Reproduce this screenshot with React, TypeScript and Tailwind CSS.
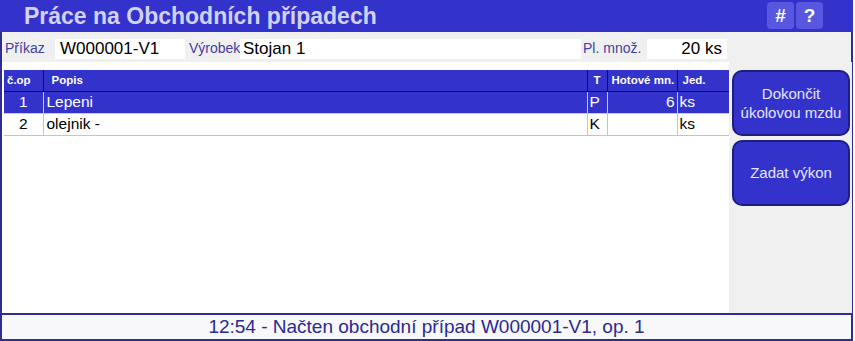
import React from "react";

type Row = {
  op: string;
  popis: string;
  t: string;
  hotove: string;
  jed: string;
};

const rows: Row[] = [
  { op: "1", popis: "Lepeni", t: "P", hotove: "6", jed: "ks" },
  { op: "2", popis: "olejnik -", t: "K", hotove: "", jed: "ks" },
];

const App: React.FC = () => {
  return (
    <div className="w-[855px] h-[341px] bg-white font-['Liberation_Sans',Arial,sans-serif]">
      <div className="w-[853px] h-[341px] flex flex-col border-x-2 border-b-2 border-[#2e2e8e]">
        {/* Title bar */}
        <div className="h-[32px] -mx-[2px] flex items-center bg-[#3333cc] pl-[24px] pr-[30px]">
          <h1 className="flex-1 text-[23px] font-bold text-[#d2d2f6] leading-none pt-[1px]">
            Práce na Obchodních případech
          </h1>
          <div className="flex gap-[2px] -mt-[1px]">
            <button className="w-[27px] h-[27px] rounded-[4px] bg-[#5757e0] text-white font-bold text-[19px] leading-none">
              #
            </button>
            <button className="w-[27px] h-[27px] rounded-[4px] bg-[#5757e0] text-white font-bold text-[19px] leading-none">
              ?
            </button>
          </div>
        </div>

        {/* Header info */}
        <div className="h-[30px] flex items-center bg-[#f0f0f0] pt-[3px] text-[14px]">
          <span className="w-[53px] pl-[3px] text-[#4040a4]">Příkaz</span>
          <div className="w-[130px] h-[20px] bg-white pl-[5px] text-[17px] leading-[20px] text-black">
            W000001-V1
          </div>
          <span className="w-[55px] pl-[4px] text-[#4040a4]">Výrobek</span>
          <div className="w-[341px] h-[20px] bg-white pl-[3px] text-[17px] leading-[20px] text-black">
            Stojan 1
          </div>
          <span className="w-[66px] pl-[2px] text-[#4040a4]">Pl. množ.</span>
          <div className="w-[80px] h-[20px] bg-white pr-[5px] text-right text-[17px] leading-[20px] text-black">
            20 ks
          </div>
        </div>

        {/* Content */}
        <div className="flex-1 flex min-h-0">
          <div className="w-[728px] bg-white pt-[8px] pl-[2px]">
            <table className="w-[725px] table-fixed border-collapse">
              <colgroup>
                <col className="w-[39px]" />
                <col className="w-[544px]" />
                <col className="w-[20px]" />
                <col className="w-[70px]" />
                <col className="w-[52px]" />
              </colgroup>
              <thead>
                <tr className="h-[21px] bg-[#3333cc] text-white text-[11.5px] font-bold">
                  <th className="text-left pl-[3px] border-r border-b border-[#10104a]">č.op</th>
                  <th className="text-left pl-[8px] border-r border-b border-[#10104a]">Popis</th>
                  <th className="text-center border-r border-b border-[#10104a]">T</th>
                  <th className="text-left pl-[4px] border-r border-b border-[#10104a]">Hotové mn.</th>
                  <th className="text-left pl-[5px] border-b border-[#10104a]">Jed.</th>
                </tr>
              </thead>
              <tbody className="text-[15.5px]">
                {rows.map((r, i) => {
                  const sel = i === 0;
                  const line = sel ? "border-[#c8c8e8]" : "border-[#c4c4c4]";
                  return (
                    <tr
                      key={r.op}
                      className={
                        sel
                          ? "h-[22px] bg-[#3333cc] text-white"
                          : "h-[22px] bg-white text-black"
                      }
                    >
                      <td className={`text-center leading-none border-r border-b ${line}`}>{r.op}</td>
                      <td className={`pl-[3px] leading-none border-r border-b ${line}`}>{r.popis}</td>
                      <td className={`pl-[2px] leading-none border-r border-b ${line}`}>{r.t}</td>
                      <td className={`text-right pr-[2px] leading-none border-r border-b ${line}`}>{r.hotove}</td>
                      <td className={`pl-[2px] leading-none border-b ${line}`}>{r.jed}</td>
                    </tr>
                  );
                })}
              </tbody>
            </table>
          </div>
          <div className="flex-1 bg-[#f0f0f0] pt-[8px] pl-[3px] pr-[2px] flex flex-col gap-[4px]">
            <button className="w-[118px] h-[66px] rounded-[10px] bg-[#3333cc] border-2 border-[#1e1e80] text-[#e6e6ff] text-[15px] leading-[19px]">
              Dokončit
              <br />
              úkolovou mzdu
            </button>
            <button className="w-[118px] h-[66px] rounded-[10px] bg-[#3333cc] border-2 border-[#1e1e80] text-[#e6e6ff] text-[15px]">
              Zadat výkon
            </button>
          </div>
        </div>

        {/* Status bar */}
        <div className="h-[26px] border-t-2 border-[#2e2e8e] bg-[#f8f8fa] flex items-center justify-center text-[19px] text-[#2a2a90]">
          12:54 - Načten obchodní případ W000001-V1, op. 1
        </div>
      </div>
    </div>
  );
};

export default App;
